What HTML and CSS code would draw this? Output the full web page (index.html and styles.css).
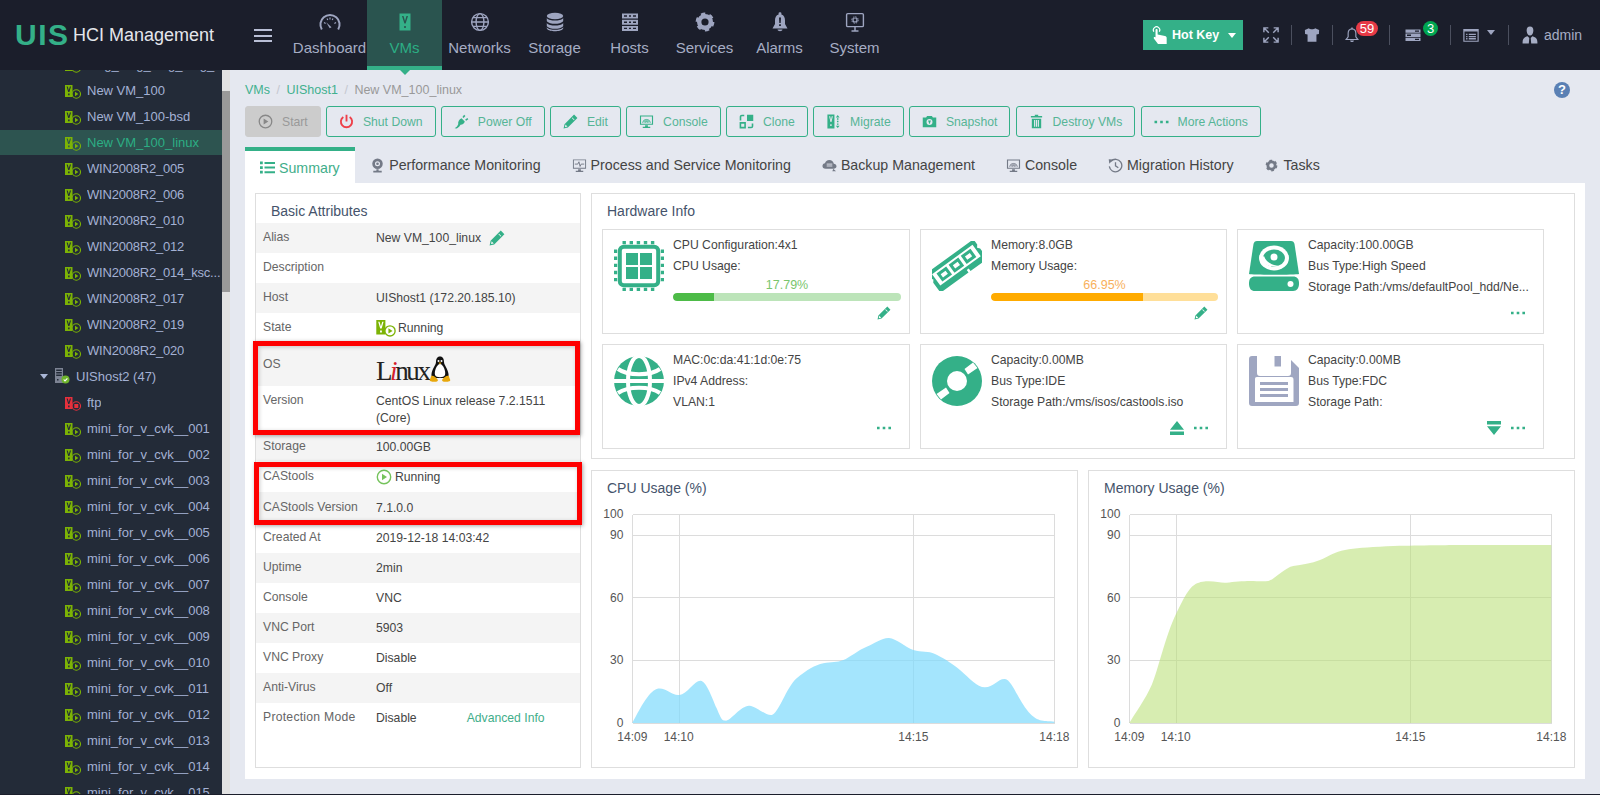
FILE: index.html
```html
<!DOCTYPE html>
<html lang="en">
<head>
<meta charset="utf-8">
<title>UIS HCI Management</title>
<link rel="stylesheet" href="styles.css">
</head>
<body>
<svg class="defs" aria-hidden="true">
  <symbol id="i-vm" viewBox="0 0 16 14">
    <path fill-rule="evenodd" fill="currentColor" d="M0 0H7.5V12H0ZM1.6 1.5L3.2 7H4.4L6 1.5H4.9L3.8 5.3L2.7 1.5ZM3.1 8.6V10.2H4.6V8.6Z"/>
    <circle class="ring" cx="11.3" cy="9" r="4.2" stroke="currentColor" stroke-width="1.1"/>
    <path fill="currentColor" d="M10 6.8L13.4 9L10 11.2Z"/>
  </symbol>
  <symbol id="i-vmstop" viewBox="0 0 16 14">
    <path fill-rule="evenodd" fill="currentColor" d="M0 0H7.5V12H0ZM1.6 1.5L3.2 7H4.4L6 1.5H4.9L3.8 5.3L2.7 1.5ZM3.1 8.6V10.2H4.6V8.6Z"/>
    <circle class="ring" cx="11.3" cy="9" r="4.2" stroke="currentColor" stroke-width="1.1"/>
    <rect fill="currentColor" x="9.3" y="7" width="4" height="4"/>
  </symbol>
  <symbol id="i-host" viewBox="0 0 16 16">
    <path fill="#7d8494" fill-rule="evenodd" d="M1 0H9V15H1ZM2.2 1.5V3H7.8V1.5ZM2.2 4V5.5H7.8V4ZM2.2 6.5V8H7.8V6.5ZM3 11V12.5H4.5V11Z"/>
    <circle cx="11.5" cy="11.5" r="4" fill="#6fb52c"/>
    <path d="M9.7 11.5L11 12.9L13.4 10.3" stroke="#fff" stroke-width="1.1" fill="none"/>
  </symbol>
  <symbol id="i-gauge" viewBox="0 0 24 24">
    <path d="M3.8 19.5A9.6 9.6 0 1 1 20.2 19.5" fill="none" stroke="currentColor" stroke-width="2"/>
    <path d="M6 12.5L7.6 13.5M9 8.5L9.8 10M15 8.5L14.2 10M18 12.5L16.4 13.5M12 7.5V9.4" stroke="currentColor" stroke-width="1.2"/>
    <path d="M8.2 12.2L13.5 17.3L11.7 18.3Z" fill="currentColor"/>
  </symbol>
  <symbol id="i-vmnav" viewBox="0 0 24 24">
    <path fill-rule="evenodd" fill="currentColor" d="M6.5 3.5H17.5V20.5H6.5ZM9 6L11.4 13.5H12.6L15 6H13.5L12 11L10.5 6ZM11.2 16V18H12.8V16Z"/>
  </symbol>
  <symbol id="i-globe" viewBox="0 0 24 24">
    <g fill="none" stroke="currentColor" stroke-width="1.4">
      <circle cx="12" cy="12" r="8.4"/><ellipse cx="12" cy="12" rx="3.9" ry="8.4"/>
      <path d="M3.6 12H20.4M5 7.6H19M5 16.4H19"/>
    </g>
  </symbol>
  <symbol id="i-db" viewBox="0 0 24 24">
    <g fill="currentColor">
      <ellipse cx="12" cy="6" rx="8.2" ry="3.2"/>
      <path d="M3.8 8C5 10 9 10.6 12 10.6S19 10 20.2 8V11C19 13.2 15 13.8 12 13.8S5 13.2 3.8 11Z"/>
      <path d="M3.8 13C5 15 9 15.6 12 15.6S19 15 20.2 13V16C19 18.2 15 18.8 12 18.8S5 18.2 3.8 16Z"/>
      <path d="M3.8 17.2C5 19.2 9 19.8 12 19.8S19 19.2 20.2 17.2V18.5C19 20.8 15 21.2 12 21.2S5 20.8 3.8 18.5Z"/>
    </g>
  </symbol>
  <symbol id="i-server" viewBox="0 0 24 24">
    <path fill="currentColor" fill-rule="evenodd" d="M4 3.5H20V8.5H4ZM4 9.7H20V14.7H4ZM4 15.9H20V20.9H4ZM6 5.3V6.7H9V5.3ZM11 5.3V6.7H13V5.3ZM15 5.3V6.7H18V5.3ZM6 11.5V12.9H9V11.5ZM11 11.5V12.9H13V11.5ZM15 11.5V12.9H18V11.5ZM6 17.7V19.1H9V17.7ZM11 17.7V19.1H13V17.7ZM15 17.7V19.1H18V17.7Z"/>
  </symbol>
  <symbol id="i-gear" viewBox="0 0 24 24">
    <g fill="none" stroke="currentColor">
      <circle cx="12" cy="12" r="5.8" stroke-width="4.4"/>
      <circle cx="12" cy="12" r="8" stroke-width="2.8" stroke-dasharray="4.2 4.18"/>
    </g>
  </symbol>
  <symbol id="i-alarm" viewBox="0 0 24 24">
    <path fill="currentColor" fill-rule="evenodd" d="M10.6 3.2C10.6 2 13.4 2 13.4 3.2V4.4C16 5.2 17 7.5 17 10.5V14L19.5 18.5H4.5L7 14V10.5C7 7.5 8 5.2 10.6 4.4ZM11 7.5L11.3 13H12.7L13 7.5ZM11.1 14.2V16H12.9V14.2Z"/>
    <path fill="currentColor" d="M9.5 19.5H14.5C14.3 21.7 9.7 21.7 9.5 19.5Z"/>
  </symbol>
  <symbol id="i-sys" viewBox="0 0 24 24">
    <rect x="3.6" y="3.6" width="16.8" height="13" rx="1.2" fill="none" stroke="currentColor" stroke-width="1.4"/>
    <path d="M8.5 21H15.5M12 17V21" stroke="currentColor" stroke-width="1.5"/>
    <circle cx="12" cy="10" r="2" fill="none" stroke="currentColor" stroke-width="1.2"/>
    <circle cx="12" cy="10" r="3.2" fill="none" stroke="currentColor" stroke-width="1" stroke-dasharray="1.5 1"/>
  </symbol>
  <symbol id="i-hand" viewBox="0 0 18 20">
    <path fill="none" stroke="currentColor" stroke-width="1.2" d="M3 6.5A3.4 3.4 0 1 1 8.8 6.5"/>
    <path fill="currentColor" d="M4.8 4.6C4.8 3.4 7 3.400 7 4.6V9.6L14.8 11C16 11.2 16.6 12 16.6 13V19.4H7.4L3 13.6C2.4 12.6 3.6 11.6 4.8 12.6Z"/>
  </symbol>
  <symbol id="i-full" viewBox="0 0 18 18">
    <path fill="none" stroke="currentColor" stroke-width="1.6" d="M1 6V1H6M12 1H17V6M17 12V17H12M6 17H1V12M1.5 1.5L6.5 6.5M16.5 1.5L11.5 6.5M16.5 16.5L11.5 11.5M1.5 16.5L6.5 11.5"/>
  </symbol>
  <symbol id="i-shirt" viewBox="0 0 18 18">
    <path fill="currentColor" d="M5.5 1.5L1 3.5L1.2 8L4 8.4V16.5H14V8.4L16.8 8L17 3.5L12.5 1.5C11.5 3 6.5 3 5.5 1.500Z"/>
  </symbol>
  <symbol id="i-bell" viewBox="0 0 16 18">
    <path fill="none" stroke="currentColor" stroke-width="1.3" d="M8 2C5 2 3.6 4.4 3.6 7V11L1.2 14.2H14.8L12.4 11V7C12.4 4.4 11 2 8 2Z"/>
    <path fill="currentColor" d="M5.8 15.2H10.2C10 17.6 6 17.6 5.8 15.2ZM7.2 .5H8.8V2.4H7.2Z"/>
  </symbol>
  <symbol id="i-stack" viewBox="0 0 16 14">
    <path fill="currentColor" fill-rule="evenodd" d="M.5 1.5H15.5V4.8H.5ZM.5 5.6H15.5V8.9H.5ZM.5 9.7H15.5V13H.5ZM10 2.5V3.8H14V2.5ZM2 6.6V7.9H6V6.6ZM10 10.7V12H14V10.7Z"/>
  </symbol>
  <symbol id="i-window" viewBox="0 0 18 16">
    <path fill="none" stroke="currentColor" stroke-width="1.3" d="M1 2H17V15H1Z"/>
    <path fill="currentColor" d="M1 1.5H17V4H1ZM3.5 6.5H5V8H3.5ZM6.5 6.5H14.5V8H6.5ZM3.5 9H5V10.5H3.5ZM6.5 9H14.5V10.5H6.5ZM3.5 11.5H5V13H3.5ZM6.5 11.5H14.5V13H6.5Z"/>
  </symbol>
  <symbol id="i-user" viewBox="0 0 16 18">
    <path fill="currentColor" d="M8 .5C10.6 .5 11.6 2.6 11.3 5.2C11 7.6 10 9.6 8 9.6S5 7.6 4.7 5.2C4.4 2.6 5.4 .5 8 .5ZM5.6 10.3L7.3 12L6.8 17.5H.6C.4 13.5 1.5 11.3 5.6 10.3ZM10.4 10.3C14.5 11.3 15.6 13.5 15.4 17.5H9.2L8.7 12Z"/>
  </symbol>
  <symbol id="i-play" viewBox="0 0 16 16">
    <circle cx="8" cy="8" r="6.7" fill="none" stroke="currentColor" stroke-width="1.4"/>
    <path fill="currentColor" d="M6 4.8L11 8L6 11.2Z"/>
  </symbol>
  <symbol id="i-power" viewBox="0 0 16 16">
    <path fill="none" stroke="currentColor" stroke-width="2" d="M4.6 3.2A6 6 0 1 0 11.4 3.2M8 .8V8"/>
  </symbol>
  <symbol id="i-plug" viewBox="0 0 16 16">
    <path fill="currentColor" d="M8 4.5L11.5 8C11 10 9.5 11.5 7 11.5L5.5 13.5L3 15.5L.7 15.3L3.2 13.2L4.5 10.8C4 8.5 5.5 5.5 8 4.5ZM9 3.2L10.8 .8L12.2 2L10.2 4.3ZM11.8 6L14.2 4.2L15.3 5.5L13 7.2Z"/>
  </symbol>
  <symbol id="i-pencil" viewBox="0 0 16 16">
    <path fill="currentColor" fill-rule="evenodd" d="M11.8 .6L15.4 4.2L5.2 14.4L.6 15.4L1.6 10.8ZM10 3.7L12.3 6L11.7 6.6L9.4 4.3ZM2.6 11.2L4.800 13.400L2 14Z"/>
  </symbol>
  <symbol id="i-monitor" viewBox="0 0 16 16">
    <path fill="currentColor" fill-rule="evenodd" d="M1 1.5H15V11.5H1ZM2.2 2.7V10.3H13.8V2.7ZM6.5 12H9.5V13.6H12V15H4V13.6H6.5Z"/>
    <path fill="none" stroke="currentColor" d="M3.8 9.2A4.3 4.3 0 0 1 12.2 9.2M5.4 9.2A2.7 2.7 0 0 1 10.6 9.2M7 9.2A1 1 0 0 1 9 9.2"/>
  </symbol>
  <symbol id="i-clone" viewBox="0 0 16 16">
    <path fill="currentColor" d="M8.5 .8H15.2V7.5H8.5Z"/>
    <path fill="none" stroke="currentColor" stroke-width="1.7" d="M1.5 9.5H6.5V14.5H1.5ZM1.6 6.8V3A1.4 1.4 0 0 1 3 1.6H5.6M14.4 10V13A1.4 1.4 0 0 1 13 14.4H9.500"/>
  </symbol>
  <symbol id="i-migrate" viewBox="0 0 16 16">
    <path fill-rule="evenodd" fill="currentColor" d="M1.5 .5H9V15.5H1.5ZM3.3 2.5L4.8 8.5H5.8L7.3 2.5H6.1L5.3 6.3L4.5 2.5ZM4.5 11V12.8H6V11Z"/>
    <path fill="currentColor" d="M12.5 1L14.5 3.6H10.5ZM12.5 15L10.5 12.4H14.5ZM11.7 4.5H13.3V6H11.7ZM11.7 7.2H13.3V8.7H11.7ZM11.7 10H13.3V11.5H11.7Z"/>
  </symbol>
  <symbol id="i-camera" viewBox="0 0 16 16">
    <path fill="currentColor" fill-rule="evenodd" d="M.8 3.6H4.4L5.4 2H10.6L11.6 3.6H15.2V14H.8ZM8 5.4A3.2 3.2 0 1 0 8 11.8A3.2 3.2 0 0 0 8 5.4Z"/>
    <path fill="currentColor" d="M6.5 6.8H9.5L8 10.8Z"/>
  </symbol>
  <symbol id="i-trash" viewBox="0 0 16 16">
    <path fill="currentColor" fill-rule="evenodd" d="M6.2 .8H9.8V2.2H14V3.8H2V2.2H6.2ZM3 5H13V15.2H3ZM5.4 6.5V13.7H6.6V6.5ZM7.4 6.5V13.7H8.6V6.5ZM9.4 6.5V13.7H10.6V6.5Z"/>
  </symbol>
  <symbol id="i-dots" viewBox="0 0 14 4">
    <path fill="currentColor" d="M0 .8H2.6V3.2H0ZM5.7 .8H8.3V3.2H5.7ZM11.4 .8H14V3.2H11.4Z"/>
  </symbol>
  <symbol id="i-list" viewBox="0 0 14 14">
    <path fill="currentColor" d="M0 1.5H2.6V4H0ZM4.2 1.8H14V3.7H4.2ZM0 5.8H2.6V8.3H0ZM4.2 6.1H14V8H4.2ZM0 10.1H2.6V12.6H0ZM4.2 10.4H14V12.3H4.2Z"/>
  </symbol>
  <symbol id="i-webcam" viewBox="0 0 14 16">
    <path fill="currentColor" fill-rule="evenodd" d="M7 .5A5.6 5.6 0 1 1 7 11.7A5.6 5.6 0 1 1 7 .5ZM7 3.4A2.7 2.7 0 1 0 7 8.8A2.7 2.7 0 1 0 7 3.4Z"/>
    <circle cx="7" cy="6.1" r="1.4" fill="currentColor"/>
    <path fill="currentColor" d="M5.8 12H8.2V13.6H11.5V15.5H2.5V13.6H5.8Z"/>
  </symbol>
  <symbol id="i-pulse" viewBox="0 0 16 16">
    <path fill="currentColor" fill-rule="evenodd" d="M1 1.5H15V11.5H1ZM2 2.5V10.5H14V2.5ZM6.5 12H9.5V13.6H12V15H4V13.6H6.5Z"/>
    <path fill="none" stroke="currentColor" d="M3 6.5H6.2L7.4 4L8.6 9L9.8 6.5H13"/>
  </symbol>
  <symbol id="i-cloud" viewBox="0 0 16 14">
    <path fill="currentColor" d="M4 10.5C1.5 10.5 .5 9 .5 7.5S1.7 4.8 3.2 4.7C3.6 2.6 5.4 1.2 7.8 1.2C10.2 1.2 12.2 2.8 12.6 5C14.2 5.2 15.5 6.3 15.5 7.8C15.5 9.5 14 10.5 12.5 10.5Z"/>
    <path fill="none" stroke="#e5e8f0" d="M5 5.5H11M5 7.5H11"/>
    <path fill="currentColor" d="M12 10.5L15 13.2L11 13Z"/>
  </symbol>
  <symbol id="i-history" viewBox="0 0 16 16">
    <path fill="none" stroke="currentColor" stroke-width="1.4" d="M3.2 3.4A6.7 6.7 0 1 1 1.4 9M8 4.4V8.4L11 10.4"/>
    <path fill="currentColor" d="M.8 1.2L5.6 1.6L1.4 6Z"/>
  </symbol>
  <symbol id="i-cpu" viewBox="0 0 50 50">
    <g stroke="currentColor" stroke-width="3.2" stroke-dasharray="3.4 3.7">
      <path d="M8.5 1.6H42M8.5 48.4H42M1.6 8.5V42M48.4 8.5V42"/>
    </g>
    <rect x="5.800" y="5.800" width="38.400" height="38.400" rx="4" fill="#fff" stroke="currentColor" stroke-width="4"/>
    <path fill="currentColor" d="M12 12H24V24H12ZM26 12H38V24H26ZM12 26H24V38H12ZM26 26H38V38H26Z"/>
  </symbol>
  <symbol id="i-ram" viewBox="0 0 50 50">
    <g transform="rotate(-36 25 25)">
      <path fill="currentColor" fill-rule="evenodd" d="M-4 13H54V19.500L52 22L54 24.500V37H33V34H30.500V37H-4V24.500L-2 22L-4 19.500Z M0 17V31H50V17Z"/>
      <path fill="currentColor" fill-rule="evenodd" d="M4 19H16V29H4ZM7 22V26H13V22ZM19 19H31V29H19ZM22 22V26H28V22ZM34 19H46V29H34ZM37 22V26H43V22Z"/>
    </g>
  </symbol>
  <symbol id="i-hdd" viewBox="0 0 50 50">
    <path fill="currentColor" d="M8 0H42C44 0 45 1 45.5 3L50 33C47 34 3 34 0 33L4.500 3C5 1 6 0 8 0Z"/>
    <path fill="currentColor" d="M6 35.500H44C48 35.500 50 38 50 42.500S48 50 44 50H6C2 50 0 47.500 0 42.500S2 35.500 6 35.500Z"/>
    <circle cx="41.500" cy="43" r="3" fill="#fff"/>
    <ellipse cx="25" cy="17" rx="15" ry="12.500" fill="#fff"/>
    <ellipse cx="25" cy="17" rx="11" ry="8.500" fill="currentColor"/>
    <path d="M12.500 17C14 24 22 27 30 25C22 24 17 21 15 15Z" fill="#fff"/>
    <circle cx="25" cy="16" r="3.500" fill="#fff"/>
  </symbol>
  <symbol id="i-net" viewBox="0 0 50 50">
    <circle cx="25" cy="25" r="25" fill="currentColor"/>
    <g fill="none" stroke="#fff" stroke-width="4">
      <ellipse cx="25" cy="25" rx="11" ry="25"/>
      <path d="M0 25H50"/>
      <path d="M4 13C14 20 36 20 46 13M4 37C14 30 36 30 46 37"/>
    </g>
  </symbol>
  <symbol id="i-disc" viewBox="0 0 50 50">
    <circle cx="25" cy="25" r="25" fill="currentColor"/>
    <circle cx="25" cy="25" r="10" fill="#fff"/>
    <path fill="#fff" d="M32.500 13L41 6.500L45.500 12L36 18.500ZM17.500 37L9 43.500L4.500 38L14 31.500Z"/>
  </symbol>
  <symbol id="i-floppy" viewBox="0 0 50 50">
    <path fill="currentColor" fill-rule="evenodd" d="M3 0H8V17C8 19 9 20 11 20H39C41 20 42 19 42 17V4L50 12V47C50 49 49 50 47 50H3C1 50 0 49 0 47V3C0 1 1 0 3 0ZM8 21H42C44 21 44.500 22 44.500 24V46H6V24C6 22 6 21 8 21ZM11 26V29H39V26ZM11 32V35H39V32ZM11 38V41H39V38Z"/>
    <path fill="currentColor" d="M25.500 0H32V10.500H25.500Z"/>
  </symbol>
  <symbol id="i-eject" viewBox="0 0 14 14">
    <path fill="currentColor" d="M7 0L14 8.800H0ZM0 10.500H14V14H0Z"/>
  </symbol>
  <symbol id="i-inject" viewBox="0 0 14 14">
    <path fill="currentColor" d="M7 14L0 5.200H14ZM0 0H14V3.500H0Z"/>
  </symbol>
  <symbol id="i-penguin" viewBox="0 0 22 27">
    <path fill="#111" d="M11 .5C14 .5 15 3 15 6C15 9 19 13 19.500 18C20 21 18 22 16 22H6C4 22 2 21 2.500 18C3 13 7 9 7 6C7 3 8 .5 11 .5Z"/>
    <path fill="#fff" d="M11 8C14 8 17 15 16 19C15 22 7 22 6 19C5 15 8 8 11 8Z"/>
    <circle cx="9.500" cy="5" r="1" fill="#fff"/><circle cx="12.500" cy="5" r="1" fill="#fff"/>
    <path fill="#e8a80c" d="M9.500 6.500H12.500L11 8.500ZM2 20C4 19 7 21 9 24C9 26 5 26.500 1 25C0 24 2 22 2 20ZM20 20C18 19 15 21 13 24C13 26 17 26.500 21 25C22 24 20 22 20 20Z"/>
  </symbol>
</svg>

<div class="app">
  <header class="topbar">
    <div class="brand"><span class="brand-mark">UIS</span><span class="brand-name">HCI Management</span></div>
    <div class="burger"><span></span><span></span><span></span></div>
    <nav class="nav">
      <a class="nav-item"><svg class="nav-icon"><use href="#i-gauge"/></svg><span>Dashboard</span></a>
      <a class="nav-item is-active"><svg class="nav-icon"><use href="#i-vmnav"/></svg><span>VMs</span></a>
      <a class="nav-item"><svg class="nav-icon"><use href="#i-globe"/></svg><span>Networks</span></a>
      <a class="nav-item"><svg class="nav-icon"><use href="#i-db"/></svg><span>Storage</span></a>
      <a class="nav-item"><svg class="nav-icon"><use href="#i-server"/></svg><span>Hosts</span></a>
      <a class="nav-item"><svg class="nav-icon"><use href="#i-gear"/></svg><span>Services</span></a>
      <a class="nav-item"><svg class="nav-icon"><use href="#i-alarm"/></svg><span>Alarms</span></a>
      <a class="nav-item"><svg class="nav-icon"><use href="#i-sys"/></svg><span>System</span></a>
    </nav>
    <div class="tools">
      <button class="hotkey"><svg class="hotkey-hand"><use href="#i-hand"/></svg><span class="hotkey-label">Hot Key</span><i class="caret caret-white"></i></button>
      <div class="tool tool-full"><svg class="tool-16"><use href="#i-full"/></svg></div>
      <div class="tool tool-shirt"><svg class="tool-16"><use href="#i-shirt"/></svg></div>
      <div class="tool tool-bell"><svg class="tool-bell-icon"><use href="#i-bell"/></svg><b class="badge badge-red">59</b></div>
      <div class="tool tool-stack"><svg class="tool-stack-icon"><use href="#i-stack"/></svg><b class="badge badge-green">3</b></div>
      <div class="tool tool-window"><svg class="tool-16"><use href="#i-window"/></svg><i class="caret caret-grey"></i></div>
      <div class="tool tool-user"><svg class="tool-user-icon"><use href="#i-user"/></svg><span>admin</span></div>
    </div>
  </header>

  <div class="below">
    <aside class="sidebar">
      <ul class="tree">
        <li class="vm"><svg class="vm-icon"><use href="#i-vm"/></svg><span class="vm-name">long_long_long_long_long</span></li>
        <li class="vm"><svg class="vm-icon"><use href="#i-vm"/></svg><span class="vm-name">New VM_100</span></li>
        <li class="vm"><svg class="vm-icon"><use href="#i-vm"/></svg><span class="vm-name">New VM_100-bsd</span></li>
        <li class="vm is-selected"><svg class="vm-icon"><use href="#i-vm"/></svg><span class="vm-name">New VM_100_linux</span></li>
        <li class="vm vm-win"><svg class="vm-icon"><use href="#i-vm"/></svg><span class="vm-name">WIN2008R2_005</span></li>
        <li class="vm vm-win"><svg class="vm-icon"><use href="#i-vm"/></svg><span class="vm-name">WIN2008R2_006</span></li>
        <li class="vm vm-win"><svg class="vm-icon"><use href="#i-vm"/></svg><span class="vm-name">WIN2008R2_010</span></li>
        <li class="vm vm-win"><svg class="vm-icon"><use href="#i-vm"/></svg><span class="vm-name">WIN2008R2_012</span></li>
        <li class="vm vm-win"><svg class="vm-icon"><use href="#i-vm"/></svg><span class="vm-name">WIN2008R2_014_ksc...</span></li>
        <li class="vm vm-win"><svg class="vm-icon"><use href="#i-vm"/></svg><span class="vm-name">WIN2008R2_017</span></li>
        <li class="vm vm-win"><svg class="vm-icon"><use href="#i-vm"/></svg><span class="vm-name">WIN2008R2_019</span></li>
        <li class="vm vm-win"><svg class="vm-icon"><use href="#i-vm"/></svg><span class="vm-name">WIN2008R2_020</span></li>
        <li class="hostrow"><i class="caret caret-tree"></i><svg class="host-icon"><use href="#i-host"/></svg><span class="vm-name">UIShost2 (47)</span></li>
        <li class="vm vm-off"><svg class="vm-icon"><use href="#i-vmstop"/></svg><span class="vm-name">ftp</span></li>
        <li class="vm"><svg class="vm-icon"><use href="#i-vm"/></svg><span class="vm-name">mini_for_v_cvk__001</span></li>
        <li class="vm"><svg class="vm-icon"><use href="#i-vm"/></svg><span class="vm-name">mini_for_v_cvk__002</span></li>
        <li class="vm"><svg class="vm-icon"><use href="#i-vm"/></svg><span class="vm-name">mini_for_v_cvk__003</span></li>
        <li class="vm"><svg class="vm-icon"><use href="#i-vm"/></svg><span class="vm-name">mini_for_v_cvk__004</span></li>
        <li class="vm"><svg class="vm-icon"><use href="#i-vm"/></svg><span class="vm-name">mini_for_v_cvk__005</span></li>
        <li class="vm"><svg class="vm-icon"><use href="#i-vm"/></svg><span class="vm-name">mini_for_v_cvk__006</span></li>
        <li class="vm"><svg class="vm-icon"><use href="#i-vm"/></svg><span class="vm-name">mini_for_v_cvk__007</span></li>
        <li class="vm"><svg class="vm-icon"><use href="#i-vm"/></svg><span class="vm-name">mini_for_v_cvk__008</span></li>
        <li class="vm"><svg class="vm-icon"><use href="#i-vm"/></svg><span class="vm-name">mini_for_v_cvk__009</span></li>
        <li class="vm"><svg class="vm-icon"><use href="#i-vm"/></svg><span class="vm-name">mini_for_v_cvk__010</span></li>
        <li class="vm"><svg class="vm-icon"><use href="#i-vm"/></svg><span class="vm-name">mini_for_v_cvk__011</span></li>
        <li class="vm"><svg class="vm-icon"><use href="#i-vm"/></svg><span class="vm-name">mini_for_v_cvk__012</span></li>
        <li class="vm"><svg class="vm-icon"><use href="#i-vm"/></svg><span class="vm-name">mini_for_v_cvk__013</span></li>
        <li class="vm"><svg class="vm-icon"><use href="#i-vm"/></svg><span class="vm-name">mini_for_v_cvk__014</span></li>
        <li class="vm"><svg class="vm-icon"><use href="#i-vm"/></svg><span class="vm-name">mini_for_v_cvk__015</span></li>
      </ul>
    </aside>
    <div class="scrolltrack"><div class="scrollthumb"></div></div>

    <main class="main">
      <div class="crumbs">
        <a class="crumb-link">VMs</a><span class="crumb-sep">/</span><a class="crumb-link">UIShost1</a><span class="crumb-sep">/</span><span class="crumb-cur">New VM_100_linux</span>
        <span class="help">?</span>
      </div>

      <div class="actions">
        <button class="btn btn-off"><svg class="btn-icon"><use href="#i-play"/></svg>Start</button>
        <button class="btn"><svg class="btn-icon btn-icon-red"><use href="#i-power"/></svg>Shut Down</button>
        <button class="btn"><svg class="btn-icon"><use href="#i-plug"/></svg>Power Off</button>
        <button class="btn"><svg class="btn-icon"><use href="#i-pencil"/></svg>Edit</button>
        <button class="btn"><svg class="btn-icon"><use href="#i-monitor"/></svg>Console</button>
        <button class="btn"><svg class="btn-icon"><use href="#i-clone"/></svg>Clone</button>
        <button class="btn"><svg class="btn-icon"><use href="#i-migrate"/></svg>Migrate</button>
        <button class="btn"><svg class="btn-icon"><use href="#i-camera"/></svg>Snapshot</button>
        <button class="btn"><svg class="btn-icon"><use href="#i-trash"/></svg>Destroy VMs</button>
        <button class="btn"><svg class="btn-dots"><use href="#i-dots"/></svg>More Actions</button>
      </div>

      <div class="tabs">
        <a class="tab is-active"><svg class="tab-icon"><use href="#i-list"/></svg>Summary</a>
        <a class="tab"><svg class="tab-icon"><use href="#i-webcam"/></svg>Performance Monitoring</a>
        <a class="tab"><svg class="tab-icon"><use href="#i-pulse"/></svg>Process and Service Monitoring</a>
        <a class="tab"><svg class="tab-icon"><use href="#i-cloud"/></svg>Backup Management</a>
        <a class="tab"><svg class="tab-icon"><use href="#i-monitor"/></svg>Console</a>
        <a class="tab"><svg class="tab-icon"><use href="#i-history"/></svg>Migration History</a>
        <a class="tab"><svg class="tab-icon"><use href="#i-gear"/></svg>Tasks</a>
      </div>

      <section class="sheet">
        <div class="panel attrs">
          <h3 class="attrs-title">Basic Attributes</h3>
          <div class="attr"><span class="k">Alias</span><span class="v">New VM_100_linux<svg class="alias-edit"><use href="#i-pencil"/></svg></span></div>
          <div class="attr"><span class="k">Description</span><span class="v"></span></div>
          <div class="attr"><span class="k">Host</span><span class="v">UIShost1 (172.20.185.10)</span></div>
          <div class="attr"><span class="k">State</span><span class="v v-state"><svg class="state-icon"><use href="#i-vm"/></svg>Running</span></div>
          <div class="attr attr-os"><span class="k">OS</span><span class="v os"><span class="os-word">L<em>i</em>nux</span><svg class="penguin"><use href="#i-penguin"/></svg></span></div>
          <div class="attr attr-ver"><span class="k">Version</span><span class="v">CentOS Linux release 7.2.1511<br>(Core)</span></div>
          <div class="attr attr-low"><span class="k">Storage</span><span class="v">100.00GB</span></div>
          <div class="attr attr-low attr-31"><span class="k">CAStools</span><span class="v v-state"><svg class="tools-icon"><use href="#i-play"/></svg>Running</span></div>
          <div class="attr attr-low attr-31"><span class="k">CAStools Version</span><span class="v">7.1.0.0</span></div>
          <div class="attr"><span class="k">Created At</span><span class="v">2019-12-18 14:03:42</span></div>
          <div class="attr"><span class="k">Uptime</span><span class="v">2min</span></div>
          <div class="attr"><span class="k">Console</span><span class="v">VNC</span></div>
          <div class="attr"><span class="k">VNC Port</span><span class="v">5903</span></div>
          <div class="attr"><span class="k">VNC Proxy</span><span class="v">Disable</span></div>
          <div class="attr"><span class="k">Anti-Virus</span><span class="v">Off</span></div>
          <div class="attr"><span class="k k-wide">Protection Mode</span><span class="v">Disable<a class="adv">Advanced Info</a></span></div>
          <div class="redbox redbox-os"></div>
          <div class="redbox redbox-tools"></div>
        </div>

        <div class="rightcol">
          <div class="panel hw">
            <h3 class="panel-title">Hardware Info</h3>
            <div class="hw-grid">
              <div class="hw-card">
                <svg class="hw-icon"><use href="#i-cpu"/></svg>
                <div class="hw-body">
                  <p>CPU Configuration:4x1</p><p>CPU Usage:</p>
                  <div class="pct pct-green">17.79%</div>
                  <div class="bar bar-green"><div class="bar-fill" style="width:17.79%"></div></div>
                  <div class="hw-act"><svg class="act-icon"><use href="#i-pencil"/></svg></div>
                </div>
              </div>
              <div class="hw-card">
                <svg class="hw-icon"><use href="#i-ram"/></svg>
                <div class="hw-body">
                  <p>Memory:8.0GB</p><p>Memory Usage:</p>
                  <div class="pct pct-orange">66.95%</div>
                  <div class="bar bar-orange"><div class="bar-fill" style="width:66.95%"></div></div>
                  <div class="hw-act"><svg class="act-icon"><use href="#i-pencil"/></svg></div>
                </div>
              </div>
              <div class="hw-card">
                <svg class="hw-icon"><use href="#i-hdd"/></svg>
                <div class="hw-body">
                  <p>Capacity:100.00GB</p><p>Bus Type:High Speed</p><p>Storage Path:/vms/defaultPool_hdd/Ne...</p>
                  <div class="hw-act"><svg class="act-dots"><use href="#i-dots"/></svg></div>
                </div>
              </div>
              <div class="hw-card">
                <svg class="hw-icon"><use href="#i-net"/></svg>
                <div class="hw-body">
                  <p>MAC:0c:da:41:1d:0e:75</p><p>IPv4 Address:</p><p>VLAN:1</p>
                  <div class="hw-act"><svg class="act-dots"><use href="#i-dots"/></svg></div>
                </div>
              </div>
              <div class="hw-card">
                <svg class="hw-icon"><use href="#i-disc"/></svg>
                <div class="hw-body">
                  <p>Capacity:0.00MB</p><p>Bus Type:IDE</p><p>Storage Path:/vms/isos/castools.iso</p>
                  <div class="hw-act"><svg class="act-icon"><use href="#i-eject"/></svg><svg class="act-dots"><use href="#i-dots"/></svg></div>
                </div>
              </div>
              <div class="hw-card">
                <svg class="hw-icon hw-icon-grey"><use href="#i-floppy"/></svg>
                <div class="hw-body">
                  <p>Capacity:0.00MB</p><p>Bus Type:FDC</p><p>Storage Path:</p>
                  <div class="hw-act"><svg class="act-icon"><use href="#i-inject"/></svg><svg class="act-dots"><use href="#i-dots"/></svg></div>
                </div>
              </div>
            </div>
          </div>

          <div class="charts">
            <div class="panel chart">
              <h3 class="chart-title">CPU Usage (%)</h3>
              <svg class="plot" viewBox="6 90 1455 801">
                <g class="grid">
                  <path d="M127.500 133.500H1393.500M127.500 196.500H1393.500M127.500 382.500H1393.500M127.500 571.500H1393.500M127.500 759.500H1393.500M127.500 133.500V759.500M268.500 133.500V759.500M970.500 133.500V759.500M1393.500 133.500V759.500"/>
                </g>
                <path class="area-cpu" d="M127 759C145 725 175 665 200 657S245 678 268 675S315 630 332 632S365 680 380 715S395 752 408 752S455 705 478 707S525 737 545 735S590 650 620 625S675 585 700 580S740 578 760 570S805 540 830 530S875 503 897 504S945 532 970 540S1015 542 1035 552S1080 575 1110 600S1160 652 1185 652S1225 625 1245 627S1285 690 1315 725S1365 750 1393 755V759Z"/>
                <g class="ylab">
                  <text x="100" y="143">100</text><text x="100" y="206">90</text><text x="100" y="395">60</text><text x="100" y="582">30</text><text x="100" y="770">0</text>
                </g>
                <g class="xlab">
                  <text x="127" y="813">14:09</text><text x="266" y="813">14:10</text><text x="970" y="813">14:15</text><text x="1393" y="813">14:18</text>
                </g>
              </svg>
            </div>
            <div class="panel chart">
              <h3 class="chart-title">Memory Usage (%)</h3>
              <svg class="plot" viewBox="27 90 1455 801">
                <g class="grid">
                  <path d="M148.500 133.500H1414.500M148.500 196.500H1414.500M148.500 382.500H1414.500M148.500 571.500H1414.500M148.500 759.500H1414.500M148.500 133.500V759.500M289.500 133.500V759.500M991.500 133.500V759.500M1414.500 133.500V759.500"/>
                </g>
                <path class="area-mem" d="M148 759C165 730 195 690 215 645S255 500 289 430S335 340 368 335S420 340 440 338S490 333 510 333S550 335 565 333S615 292 640 288S695 280 720 270S765 245 795 240S860 232 920 229S1000 228 1050 226S1350 225 1414 225V759Z"/>
                <g class="ylab">
                  <text x="121" y="143">100</text><text x="121" y="206">90</text><text x="121" y="395">60</text><text x="121" y="582">30</text><text x="121" y="770">0</text>
                </g>
                <g class="xlab">
                  <text x="148" y="813">14:09</text><text x="287" y="813">14:10</text><text x="991" y="813">14:15</text><text x="1414" y="813">14:18</text>
                </g>
              </svg>
            </div>
          </div>
        </div>
      </section>
    </main>
  </div>
</div>
</body>
</html>
```

FILE: styles.css
```css
* { box-sizing: border-box; }
html, body { margin: 0; padding: 0; }
body {
  width: 1600px; height: 795px; overflow: hidden;
  font-family: "Liberation Sans", Arial, sans-serif;
  font-size: 12px; color: #444; background: #e5e8f0;
}
h3, p, ul { margin: 0; padding: 0; font-weight: normal; }
svg { display: block; flex: none; }
.defs { position: absolute; width: 0; height: 0; overflow: hidden; }
.ring { fill: var(--ring, #fff); }

.app { display: flex; flex-direction: column; height: 795px; border-bottom: 1px solid #1b1e2b; }

/* top bar */
.topbar { flex: none; display: flex; height: 70px; background: #1b1e2b; color: #a6adc4; }
.brand { width: 254px; padding-left: 15px; display: flex; align-items: center; }
.brand-mark { font-size: 30px; line-height: 70px; font-weight: bold; color: #34b088; letter-spacing: 1.500px; width: 58px; }
.brand-name { font-size: 18px; color: #e4e6ec; }
.burger { width: 38px; display: flex; flex-direction: column; gap: 3.600px; padding-top: 29px; }
.burger span { display: block; width: 18px; height: 2px; background: #b9bfd6; }
.nav { display: flex; }
.nav-item { width: 75px; display: flex; flex-direction: column; align-items: center; padding-top: 10px; position: relative; color: #a6adc4; font-size: 15px; line-height: 20px; white-space: nowrap; }
.nav-icon { width: 24px; height: 24px; margin-bottom: 4px; color: #9ea5c0; }
.nav-item.is-active { background: #2a544f; color: #2cae84; border-bottom: 4px solid #34b088; }
.nav-item.is-active .nav-icon { color: #34b088; }
.nav-item.is-active::after {
  content: ""; position: absolute; left: 50%; bottom: -9px; margin-left: -5px;
  border: 5px solid transparent; border-top-color: #34b088; border-bottom-width: 0;
}
.tools { margin-left: auto; display: flex; align-items: center; }
.hotkey {
  width: 100px; height: 30px; border: 0; padding: 0 8px 0 8px; background: #34b088; color: #fff;
  display: flex; align-items: center; font: bold 12.500px "Liberation Sans", Arial, sans-serif; margin-right: 20px;
}
.hotkey-hand { width: 17px; height: 20px; margin-right: 4px; }
.hotkey-label { white-space: nowrap; flex: none; }
.caret { display: block; flex: none; width: 0; height: 0; border-left: 4px solid transparent; border-right: 4px solid transparent; border-top: 5px solid #fff; }
.caret-white { margin-left: 9px; }
.caret-grey { border-top-color: #9ea5c0; margin: -6px 0 0 8px; }
.caret-tree { border-top-color: #a9b6d6; margin-left: 40px; }
.tool { position: relative; height: 20px; display: flex; align-items: center; color: #9ea5c0; }
.tool + .tool { border-left: 1px solid #4b4f5e; }
.tool-16 { width: 16px; height: 16px; }
.tool-full { width: 28px; }
.tool-shirt { width: 41px; padding-left: 12px; }
.tool-bell { width: 57px; padding-left: 12px; }
.tool-bell-icon { width: 14px; height: 16px; }
.tool-stack { width: 61px; padding-left: 15px; }
.tool-stack-icon { width: 16px; height: 14px; }
.tool-window { width: 58px; padding-left: 12px; }
.tool-user { width: 92px; padding-left: 13px; font-size: 14px; color: #a6adc4; }
.tool-user-icon { width: 16px; height: 18px; margin-right: 6px; }
.badge { position: absolute; top: -4px; color: #fff; font-weight: normal; font-size: 13px; line-height: 15px; text-align: center; }
.badge-red { left: 23px; width: 22px; background: #e63a46; border-radius: 7.500px; }
.badge-green { left: 33px; width: 15px; background: #00a651; border-radius: 50%; }

/* sidebar */
.below { flex: 1; min-height: 0; display: flex; }
.sidebar { width: 222px; flex: none; background: #232b38; overflow: hidden; }
.tree { list-style: none; margin-top: -19px; }
.vm, .hostrow { height: 26px; display: flex; align-items: center; font-size: 13px; color: #a3b1d4; white-space: nowrap; --ring: #232b38; }
.vm { padding-left: 65px; }
.vm-icon { width: 16px; height: 14px; margin-right: 6px; color: #7cb305; margin-top: 3px; }
.vm-name { overflow: hidden; }
.vm-win { letter-spacing: -.2px; }
.vm.is-selected { background: #2d5450; color: #2cae84; --ring: #2d5450; height: 25px; margin-top: 1px; }
.vm-off .vm-icon { color: #e6303c; }
.host-icon { width: 16px; height: 16px; margin: 0 6px; }
.scrolltrack { width: 8px; flex: none; background: #e1e1e1; padding-top: 21px; }
.scrollthumb { height: 201px; background: #999; }

/* main */
.main { flex: 1; min-width: 0; padding: 0 15px; }
.crumbs { height: 36px; display: flex; align-items: center; font-size: 12.500px; padding-top: 4px; line-height: 16px; }
.crumb-link { color: #41b08e; }
.crumb-sep { color: #c4c7cf; margin: 0 6.500px; }
.crumb-cur { color: #999; }
.help { margin-left: auto; margin-right: 15px; width: 16px; height: 16px; border-radius: 50%; background: #5a80b4; color: #fff; font-weight: bold; font-size: 13px; line-height: 16px; text-align: center; }
.actions { display: flex; gap: 5.200px; height: 31px; }
.btn {
  height: 31px; padding: 0 12px; border: 1px solid #34b088; border-radius: 3px; background: transparent; color: #56b596;
  display: flex; align-items: center; gap: 9px; font: 12.200px "Liberation Sans", Arial, sans-serif; white-space: nowrap;
}
.btn-off { background: #cccccc; border-color: #cccccc; color: #999; }
.btn-icon { width: 15px; height: 15px; color: #34b088; }
.btn-off .btn-icon { color: #888; }
.btn-icon-red { color: #ee4049; }
.btn-dots { width: 15px; height: 4px; color: #34b088; }

.tabs { display: flex; height: 36px; margin-top: 10px; }
.tab { display: flex; align-items: center; gap: 4px; padding: 0 15.500px; font-size: 14.200px; color: #444; white-space: nowrap; }
.tab-icon { width: 15px; height: 15px; color: #747a87; }
.tab.is-active { background: #fff; color: #3fae8a; border-top: 4px solid #34b088; padding: 1px 15px 0; }
.tab.is-active .tab-icon { color: #34b088; }

.sheet { background: #fff; height: 596px; padding: 10px; display: grid; grid-template-columns: 326px 984px; column-gap: 10px; }
.panel { border: 1px solid #dedede; background: #fff; }

/* attributes */
.attrs { position: relative; --ring: #fff; height: 575px; font-size: 12.200px; }
.attrs-title { height: 29px; font-size: 14px; color: #45536b; padding: 9px 0 0 15px; line-height: 16px; }
.attr { height: 30px; display: flex; }
.attr:nth-child(even) { background: #f4f4f4; }
.k { width: 120px; padding-left: 7px; line-height: 28px; color: #666; flex: none; white-space: nowrap; }
.k-wide { letter-spacing: .25px; }
.v { line-height: 30px; color: #444; display: flex; align-items: center; height: 30px; white-space: nowrap; }
.attr-os { height: 43px; }
.attr-os .k { line-height: 42px; }
.attr-ver { height: 45px; }
.attr-ver .k { line-height: 29px; }
.attr-ver .v { display: block; height: auto; line-height: 16.500px; padding-top: 7px; }
.attr-31 { height: 31px; }
.attr-low .k { line-height: 30px; }
.attr-low .v { line-height: 32px; height: 32px; }
.alias-edit { width: 16px; height: 16px; margin-left: 8px; color: #34b088; }
.state-icon { width: 20px; height: 17px; margin-right: 2px; color: #7cb305; }
.tools-icon { width: 16px; height: 16px; margin-right: 3px; color: #75c35c; }
.os { height: 43px; }
.os-word { font: 27px/1 "Liberation Serif", "Times New Roman", serif; color: #222; letter-spacing: -2.400px; margin-top: 14px; }
.os-word em { color: #d4202a; }
.penguin { width: 22px; height: 27px; margin: 10px 0 0 0; }
.adv { color: #3fae8a; margin-left: 50px; }
.redbox { position: absolute; border: 5px solid #fe0000; box-shadow: 1px 1px 4px rgba(0,0,0,.35), inset 1px 1px 4px rgba(0,0,0,.2); pointer-events: none; }
.redbox-os { left: -3px; top: 147px; width: 327px; height: 94px; }
.redbox-tools { left: -2px; top: 268px; width: 328px; height: 63px; }

/* hardware */
.rightcol { display: flex; flex-direction: column; gap: 11px; }
.hw { height: 266px; padding: 0 30px 0 10px; }
.panel-title { height: 35px; font-size: 14px; line-height: 34px; color: #45536b; padding-left: 5px; }
.hw-grid { display: grid; grid-template-columns: 308px 307px 307px; grid-auto-rows: 105px; gap: 10px; }
.hw-card { border: 1px solid #dedede; display: flex; padding: 5px 0 13px 11px; position: relative; }
.hw-icon { width: 50px; height: 50px; margin: 6px 9px 0 0; color: #34b088; }
.hw-icon-grey { color: #9fa6c1; }
.hw-body { flex: 1; min-width: 0; display: flex; flex-direction: column; padding-right: 8px; }
.hw-body p { line-height: 21px; font-size: 12.200px; white-space: nowrap; color: #444; }
.pct { text-align: center; line-height: 16px; font-size: 12.500px; }
.pct-green { color: #79c66c; }
.pct-orange { color: #f8b15c; }
.bar { height: 8px; border-radius: 4px; overflow: hidden; }
.bar-fill { height: 100%; border-radius: 4px 0 0 4px; }
.bar-green { background: #bce4b9; }
.bar-green .bar-fill { background: #4dbb47; }
.bar-orange { background: #ffdf99; }
.bar-orange .bar-fill { background: #ffab00; }
.hw-act { margin-top: auto; display: flex; justify-content: flex-end; align-items: center; gap: 10px; padding-right: 10px; height: 14px; }
.act-icon { width: 14px; height: 14px; color: #34b088; }
.act-dots { width: 14px; height: 4px; color: #34b088; }

/* charts */
.charts { display: grid; grid-template-columns: 487px 487px; gap: 10px; }
.chart { height: 298px; }
.chart-title { height: 29px; padding: 8px 0 0 15px; font-size: 14px; line-height: 18px; color: #45536b; }
.plot { width: 485px; height: 267px; }
.grid path { fill: none; stroke: #dcdcdc; stroke-width: 3; shape-rendering: crispEdges; }
.area-cpu { fill: rgba(126, 218, 252, .7); }
.area-mem { fill: rgba(186, 224, 120, .58); }
.ylab text, .xlab text { font-size: 36px; fill: #555; font-family: "Liberation Sans", Arial, sans-serif; }
.ylab text { text-anchor: end; }
.xlab text { text-anchor: middle; }
```
